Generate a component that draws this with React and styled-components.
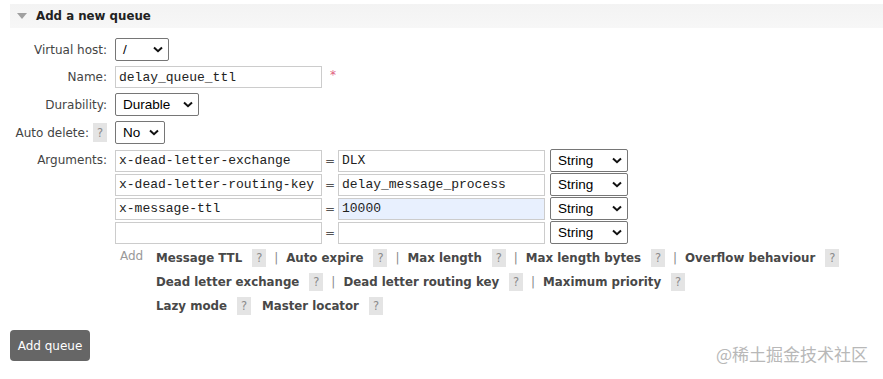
import React from 'react'
import styled, { createGlobalStyle } from 'styled-components'

const Global = createGlobalStyle`
  html, body { margin: 0; padding: 0; background: #fff; }
  body {
    font-family: "DejaVu Sans", Verdana, sans-serif;
    font-size: 12px;
    color: #444;
  }
`

const Page = styled.div`
  position: relative;
  width: 883px;
  height: 379px;
  padding: 4px 0 0 10px;
  box-sizing: border-box;
  overflow: hidden;
`

const Header = styled.div`
  display: flex;
  align-items: center;
  height: 24px;
  background: linear-gradient(#f3f3f3, #f7f7f7);
  padding-left: 7px;
  gap: 9px;
`

const Title = styled.h2`
  margin: 0;
  font-size: 11.8px;
  font-weight: bold;
  color: #222;
`

const Form = styled.div`
  display: grid;
  grid-template-columns: 97px auto;
  column-gap: 8px;
  row-gap: 5px;
  margin-top: 10px;
  align-items: start;
`

const Label = styled.div`
  display: flex;
  align-items: center;
  justify-content: flex-end;
  gap: 4px;
  height: ${({ $h }) => $h || 23}px;
  color: #444;
  white-space: nowrap;
`

const Field = styled.div`
  display: flex;
  align-items: center;
  gap: 8px;
`

const Select = styled.div`
  display: flex;
  align-items: center;
  justify-content: space-between;
  box-sizing: border-box;
  width: ${({ $w }) => $w}px;
  height: 23px;
  padding: 0 5px 0 7px;
  border: 1px solid #767676;
  border-radius: 2px;
  background: #fff;
  font-family: "Liberation Sans", Arial, sans-serif;
  font-size: 13.5px;
  color: #000;
`

const TextInput = styled.div`
  box-sizing: border-box;
  width: 207px;
  height: 22px;
  padding: 0 3px;
  display: flex;
  align-items: center;
  border: 1px solid #ccc;
  background: ${({ $filled }) => ($filled ? '#e8f0fe' : '#fff')};
  font-family: "Liberation Mono", "Courier New", monospace;
  font-size: 13px;
  color: #222;
  white-space: pre;
`

const Required = styled.span`
  color: #e0607e;
  font-size: 12px;
  margin-top: -4px;
`

const Help = styled.span`
  display: inline-flex;
  align-items: center;
  justify-content: center;
  width: 14px;
  height: ${({ $tall }) => ($tall ? 19 : 18)}px;
  background: #e4e4e4;
  color: #8a8a8a;
  font-size: 11.5px;
`

const ArgTable = styled.div`
  display: flex;
  flex-direction: column;
  gap: 1px;
`

const ArgRow = styled.div`
  display: flex;
  align-items: center;
`

const Eq = styled.span`
  width: 16px;
  text-align: center;
  color: #555;
`

const Gap = styled.span`
  width: 5px;
`

const AddBlock = styled.div`
  display: flex;
  margin-top: 5px;
  padding-left: 5px;
`

const AddLabel = styled.span`
  color: #999;
  width: 36px;
  line-height: 14px;
`

const LinkRows = styled.div`
  display: flex;
  flex-direction: column;
  gap: 6px;
`

const LinkRow = styled.div`
  display: flex;
  align-items: center;
  height: 18px;
`

const Link = styled.span`
  font-weight: bold;
  font-size: 11.8px;
  color: #484848;
  margin-right: 10px;
  white-space: nowrap;
`

const Sep = styled.span`
  width: ${({ $bar }) => ($bar ? 20 : 11)}px;
  text-align: center;
  color: #888;
`

const Button = styled.button`
  margin-top: 15px;
  width: 80px;
  height: 31px;
  border: none;
  border-radius: 4px;
  background: #666;
  color: #fff;
  font-family: "DejaVu Sans", Verdana, sans-serif;
  font-size: 12px;
  padding: 0;
`

const Watermark = styled.div`
  position: absolute;
  right: 15px;
  bottom: 13px;
  font-family: "Noto Sans CJK SC", sans-serif;
  font-size: 17px;
  color: #b8b8b8;
`

const Chevron = () => (
  <svg width="10" height="7" viewBox="0 0 10 7">
    <path d="M1 1.5 L5 5.2 L9 1.5" fill="none" stroke="#111" strokeWidth="2" />
  </svg>
)

const Triangle = () => (
  <svg width="10" height="6" viewBox="0 0 10 6">
    <path d="M0 0 H10 L5 6 Z" fill="#a0a0a0" />
  </svg>
)

const args = [
  ['x-dead-letter-exchange', 'DLX'],
  ['x-dead-letter-routing-key', 'delay_message_process'],
  ['x-message-ttl', '10000', true],
  ['', ''],
]

const linkRows = [
  [['Message TTL', true], ['Auto expire', true], ['Max length', true], ['Max length bytes', true], ['Overflow behaviour']],
  [['Dead letter exchange', true], ['Dead letter routing key', true], ['Maximum priority']],
  [['Lazy mode', false], ['Master locator']],
]

export default function App() {
  return (
    <>
      <Global />
      <Page>
        <Header>
          <Triangle />
          <Title>Add a new queue</Title>
        </Header>

        <Form>
          <Label>Virtual host:</Label>
          <Field>
            <Select $w={54}>/<Chevron /></Select>
          </Field>

          <Label $h={22}>Name:</Label>
          <Field>
            <TextInput>delay_queue_ttl</TextInput>
            <Required>*</Required>
          </Field>

          <Label>Durability:</Label>
          <Field>
            <Select $w={84}>Durable<Chevron /></Select>
          </Field>

          <Label>Auto delete:<Help $tall>?</Help></Label>
          <Field>
            <Select $w={50}>No<Chevron /></Select>
          </Field>

          <Label $h={22}>Arguments:</Label>
          <div>
            <ArgTable>
              {args.map(([k, v, filled], i) => (
                <ArgRow key={i}>
                  <TextInput>{k}</TextInput>
                  <Eq>=</Eq>
                  <TextInput $filled={filled}>{v}</TextInput>
                  <Gap />
                  <Select $w={78}>String<Chevron /></Select>
                </ArgRow>
              ))}
            </ArgTable>
            <AddBlock>
              <AddLabel>Add</AddLabel>
              <LinkRows>
                {linkRows.map((row, r) => (
                  <LinkRow key={r}>
                    {row.map(([name, bar], i) => (
                      <React.Fragment key={name}>
                        <Link>{name}</Link>
                        <Help>?</Help>
                        {i < row.length - 1 && <Sep $bar={bar}>{bar ? '|' : ''}</Sep>}
                      </React.Fragment>
                    ))}
                  </LinkRow>
                ))}
              </LinkRows>
            </AddBlock>
          </div>
        </Form>

        <Button>Add queue</Button>

        <Watermark>@稀土掘金技术社区</Watermark>
      </Page>
    </>
  )
}
